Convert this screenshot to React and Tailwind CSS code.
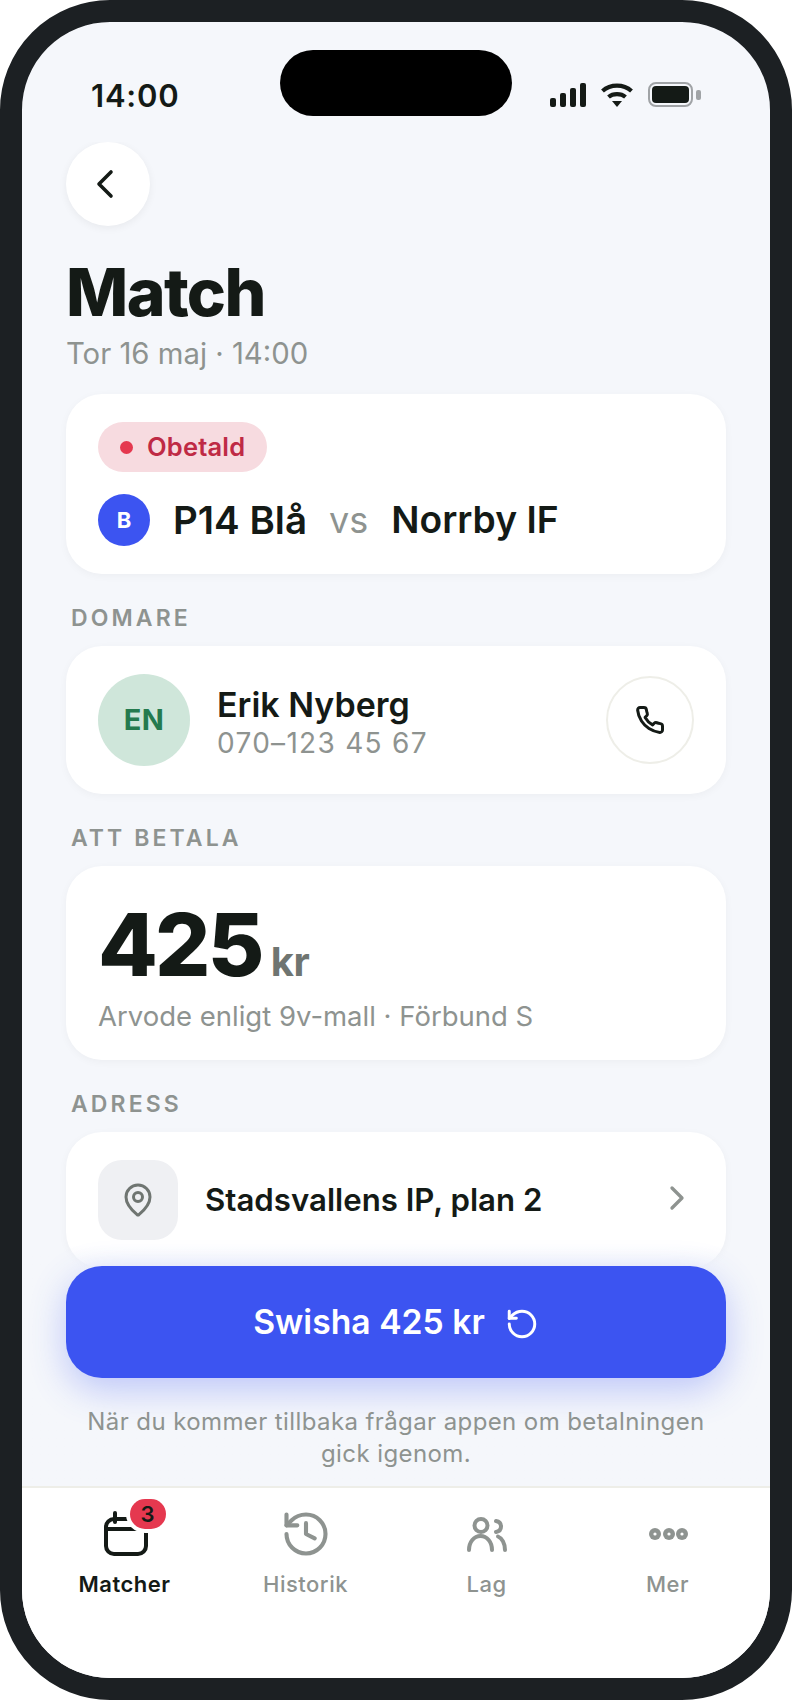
import React from 'react';

const F = "font-['Inter','Noto_Sans',sans-serif]";

function SectionLabel({ children }) {
  return <div className="mt-[30px] mb-[14px] pl-[5px] text-[23px] leading-[28px] font-semibold tracking-[3.1px] text-[#8e9390]">{children}</div>;
}

function Card({ className = '', children }) {
  return <div className={`rounded-[36px] bg-white shadow-[0_2px_8px_rgba(20,25,20,0.04)] ${className}`}>{children}</div>;
}

function CalIcon() {
  return (
    <svg width="48" height="48" viewBox="0 0 48 48" fill="none" stroke="#141a16" strokeWidth="4" strokeLinecap="round" strokeLinejoin="round">
      <path d="M14 3v9" /><path d="M36 3v9" />
      <rect x="5" y="9" width="40" height="35" rx="8" />
      <path d="M5 19h40" />
    </svg>
  );
}

function Tab({ label, active, children }) {
  return (
    <div className="flex flex-col items-center">
      <div className="relative flex h-[48px] w-[48px] items-center justify-center">{children}</div>
      <div className={`mt-[12px] text-[22px] leading-[28px] tracking-[0.5px] ${active ? 'font-semibold text-[#141a16]' : 'font-medium text-[#8e9390]'}`}>{label}</div>
    </div>
  );
}

export default function App() {
  return (
    <div className={`${F} h-[1700px] w-[792px] bg-white`}>
      <div className="relative flex h-full w-full flex-col overflow-hidden rounded-[110px] border-[22px] border-[#1c2023] bg-[#f5f7fb]">
        <div className="absolute left-[258px] top-[28px] h-[66px] w-[232px] rounded-full bg-black" />
        <div className="flex h-[120px] shrink-0 items-start justify-between pl-[69px] pr-[69px] pt-[56px]">
          <span className="text-[31px] leading-[36px] font-semibold tracking-[0.8px] text-[#141a16]">14:00</span>
          <div className="flex items-center gap-[15px] pt-[4px]">
            <svg width="36" height="24" viewBox="0 0 36 24" fill="#141a16" className="shrink-0">
              <rect x="0" y="15" width="6" height="9" rx="2" /><rect x="10" y="10" width="6" height="14" rx="2" /><rect x="20" y="5" width="6" height="19" rx="2" /><rect x="30" y="0" width="6" height="24" rx="2" />
            </svg>
            <svg width="32" height="24" viewBox="0 0 32 24" fill="none" stroke="#141a16" strokeWidth="4.2" className="shrink-0">
              <path d="M1.5 8C9.5 0.8 22.5 0.8 30.5 8" /><path d="M7.5 14C12 10.2 20 10.2 24.5 14" />
              <path d="M11 18h10l-5 6z" fill="#141a16" stroke="none" />
            </svg>
            <div className="flex items-center gap-[3px]">
              <div className="h-[25px] w-[45px] rounded-[8px] border-2 border-[#a0a3a6] p-[2px]"><div className="h-full w-full rounded-[4px] bg-[#141a16]" /></div>
              <div className="h-[10px] w-[5px] rounded-[2px] bg-[#a0a3a6]" />
            </div>
          </div>
        </div>

        <div className="min-h-0 flex-1 overflow-hidden px-[44px]">
          <button className="flex h-[84px] w-[84px] items-center justify-center rounded-full bg-white shadow-[0_2px_8px_rgba(20,25,20,0.06)]">
            <svg width="48" height="48" viewBox="0 0 24 24" fill="none" stroke="#141a16" strokeWidth="1.8" strokeLinecap="round" strokeLinejoin="round"><path d="m13.5 18-6-6 6-6" /></svg>
          </button>
          <h1 className="mt-[28px] text-[66px] leading-[76px] font-extrabold tracking-[-1.6px] text-[#141a16]">Match</h1>
          <p className="mt-[6px] text-[29.3px] leading-[36px] text-[#8e9390]">Tor 16 maj · 14:00</p>

          <Card className="mt-[22px] h-[180px] px-[32px] pt-[28px]">
            <div className="inline-flex h-[50px] items-center gap-[14px] rounded-full bg-[#f7dbe0] px-[22px]">
              <span className="h-[13px] w-[13px] rounded-full bg-[#e5384f]" />
              <span className="text-[25.5px] font-semibold tracking-[0.2px] text-[#bf2a45]">Obetald</span>
            </div>
            <div className="mt-[22px] flex items-center">
              <div className="flex h-[52px] w-[52px] items-center justify-center rounded-full bg-[#3c54f1] text-[22px] font-bold text-white">B</div>
              <span className="ml-[23px] text-[38.5px] leading-[52px] font-semibold text-[#141a16]">P14 Blå</span>
              <span className="ml-[22px] text-[36px] leading-[52px] text-[#8e9390]">vs</span>
              <span className="ml-[23px] text-[37.2px] leading-[52px] font-semibold text-[#141a16]">Norrby IF</span>
            </div>
          </Card>

          <SectionLabel>DOMARE</SectionLabel>
          <Card className="flex h-[148px] items-center px-[32px]">
            <div className="flex h-[92px] w-[92px] items-center justify-center rounded-full bg-[#cfe6da] text-[29px] font-bold tracking-[0.5px] text-[#247a4e]">EN</div>
            <div className="ml-[27px] flex-1 pt-[6px]">
              <div className="text-[34px] leading-[40px] font-semibold text-[#141a16]">Erik Nyberg</div>
              <div className="text-[28px] leading-[37px] tracking-[1.3px] text-[#8e9390]">070–123 45 67</div>
            </div>
            <div className="flex h-[88px] w-[88px] items-center justify-center rounded-full border-2 border-[#eeeee8]">
              <svg width="30" height="30" viewBox="0 0 24 24" fill="none" stroke="#141a16" strokeWidth="2.4" strokeLinecap="round" strokeLinejoin="round"><path d="M22 16.92v3a2 2 0 0 1-2.18 2 19.8 19.8 0 0 1-8.63-3.07 19.5 19.5 0 0 1-6-6 19.8 19.8 0 0 1-3.07-8.67A2 2 0 0 1 4.11 2h3a2 2 0 0 1 2 1.72c.13.96.36 1.9.7 2.81a2 2 0 0 1-.45 2.11L8.09 9.91a16 16 0 0 0 6 6l1.27-1.27a2 2 0 0 1 2.11-.45c.91.34 1.85.57 2.81.7A2 2 0 0 1 22 16.92z" /></svg>
            </div>
          </Card>

          <SectionLabel>ATT BETALA</SectionLabel>
          <Card className="h-[194px] px-[32px] pt-[29px]">
            <div className="flex items-baseline">
              <span className="text-[87px] leading-[100px] font-extrabold tracking-[-2.8px] text-[#141a16]">425</span>
              <span className="ml-[9px] text-[40px] font-bold tracking-[-0.5px] text-[#6f7571]">kr</span>
            </div>
            <div className="mt-[3px] text-[27.5px] leading-[36px] text-[#8e9390]">Arvode enligt 9v-mall · Förbund S</div>
          </Card>

          <SectionLabel>ADRESS</SectionLabel>
          <Card className="flex h-[136px] items-center px-[32px]">
            <div className="flex h-[80px] w-[80px] items-center justify-center rounded-[24px] bg-[#eff0f3]">
              <svg width="36" height="36" viewBox="0 0 24 24" fill="none" stroke="#6f7571" strokeWidth="2" strokeLinecap="round" strokeLinejoin="round"><path d="M20 10c0 5-5.5 10.2-7.4 11.8a1 1 0 0 1-1.2 0C9.5 20.2 4 15 4 10a8 8 0 0 1 16 0" /><circle cx="12" cy="10" r="3" /></svg>
            </div>
            <div className="ml-[27px] flex-1 text-[31.2px] font-semibold text-[#141a16]">Stadsvallens IP, plan 2</div>
            <svg width="40" height="40" viewBox="0 0 24 24" fill="none" stroke="#8e9390" strokeWidth="2" strokeLinecap="round" strokeLinejoin="round" className="-mr-[3px] mb-[4px] shrink-0"><path d="m9 18 6-6-6-6" /></svg>
          </Card>
        </div>

        <div className="absolute inset-x-0 bottom-[192px] bg-gradient-to-b from-[#f5f7fb00] to-[#f5f7fb] to-[24px] px-[44px] pt-[20px] pb-[16px]">
          <button className="flex h-[112px] w-full items-center justify-center gap-[20px] rounded-[36px] bg-[#3c54f1] text-[33.7px] font-semibold text-white shadow-[0_12px_36px_rgba(61,85,244,0.3)]">
            Swisha 425 kr
            <svg width="34" height="34" viewBox="0 0 24 24" fill="none" stroke="#fff" strokeWidth="2.1" strokeLinecap="round" strokeLinejoin="round" className="mt-[3px] shrink-0"><path d="M3 12a9 9 0 1 0 9-9 9.75 9.75 0 0 0-6.74 2.74L3 8" /><path d="M3 3v5h5" /></svg>
          </button>
          <p className="mx-auto mt-[28px] w-[640px] text-center text-[24px] leading-[32px] tracking-[0.4px] text-[#8e9390]">När du kommer tillbaka frågar appen om betalningen gick igenom.</p>
        </div>

        <nav className="grid h-[192px] shrink-0 grid-cols-4 border-t-2 border-[#eeeee8] bg-white px-[12px] pt-[22px]">
          <Tab label="Matcher" active>
            <CalIcon />
            <span className="absolute -right-[17px] -top-[11px] flex h-[30px] min-w-[36px] items-center justify-center rounded-full bg-[#e5384f] text-[22px] font-semibold text-[#141a16] shadow-[0_0_0_4px_#fff]">3</span>
          </Tab>
          <Tab label="Historik">
            <svg width="52" height="52" viewBox="0 0 24 24" fill="none" stroke="#8e9390" strokeWidth="1.9" strokeLinecap="round" strokeLinejoin="round" className="shrink-0"><path d="M3 12a9 9 0 1 0 9-9 9.75 9.75 0 0 0-6.74 2.74L3 8" /><path d="M3 3v5h5" /><path d="M12 7v5l4 2" /></svg>
          </Tab>
          <Tab label="Lag">
            <svg width="48" height="48" viewBox="0 0 48 48" fill="none" stroke="#8e9390" strokeWidth="4" strokeLinecap="round" strokeLinejoin="round" className="shrink-0">
              <circle cx="18" cy="15.5" r="6.5" />
              <path d="M6 40c0-8 5-14 11.5-14S29 32 29 40" />
              <path d="M33 11c3 .5 5 2.5 5 5.5s-2 5-5 5.5" />
              <path d="M35 26.5c4 1.5 7 7 7 13.5" />
            </svg>
          </Tab>
          <Tab label="Mer">
            <svg width="48" height="48" viewBox="0 0 48 48" fill="#8e9390" className="shrink-0"><circle cx="11" cy="24" r="6" /><circle cx="25" cy="24" r="6" /><circle cx="38" cy="24" r="6" /><circle cx="11" cy="24" r="1.6" fill="#fff" /><circle cx="25" cy="24" r="1.6" fill="#fff" /><circle cx="38" cy="24" r="1.6" fill="#fff" /></svg>
          </Tab>
        </nav>
      </div>
    </div>
  );
}
